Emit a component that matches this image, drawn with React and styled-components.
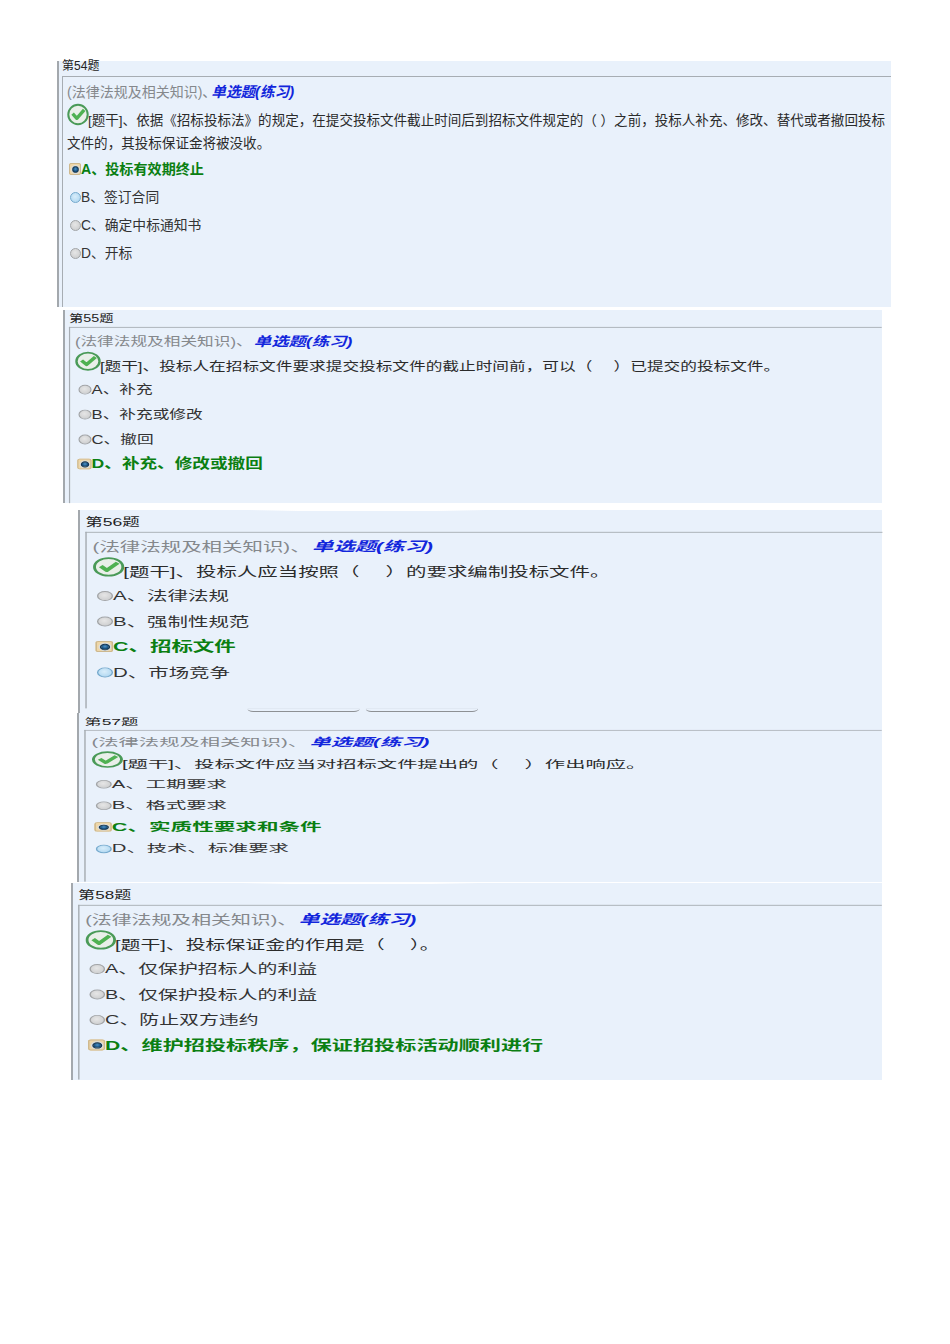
import React from "react";
import styled, { createGlobalStyle } from "styled-components";

const Global = createGlobalStyle`
  html, body { margin: 0; padding: 0; background: #fff; }
  body { font-family: "Liberation Sans", "Noto Sans CJK SC", sans-serif; }
`;

const Page = styled.div`
  width: 950px;
  height: 1344px;
  padding-top: 61px;
  box-sizing: border-box;
  display: flex;
  flex-direction: column;
  overflow: hidden;
`;

const Block = styled.section`
  position: relative;
  flex: none;
  margin-left: ${(p) => p.$left}px;
  margin-top: ${(p) => p.$gap}px;
  width: ${(p) => p.$width}px;
  height: ${(p) => p.$height}px;
  box-sizing: border-box;
  background: #e9f1fb;
  border-left: 2px solid #a3a8ad;
`;

const Scaled = styled.div`
  width: ${(p) => p.$width / p.$sx}px;
  height: ${(p) => p.$height / p.$sy}px;
  padding-top: ${(p) => p.$pad}px;
  margin-left: -2px;
  box-sizing: border-box;
  display: flex;
  flex-direction: column;
  transform: scale(${(p) => p.$sx}, ${(p) => p.$sy});
  transform-origin: 0 0;
`;

const Glint = styled.div`
  position: absolute;
  top: 0;
  left: 170px;
  width: 235px;
  height: 1px;
  background: linear-gradient(90deg, #e9f1fb, #ffffff 20%, #ffffff 80%, #e9f1fb);
`;

const Title = styled.div`
  flex: none;
  height: 11px;
  line-height: 11px;
  margin: 0 0 4px 5px;
  font-size: 12px;
  color: #222;
  white-space: nowrap;
`;

const Panel = styled.div`
  flex: 1;
  min-height: 0;
  margin-left: 4.5px;
  padding: 7px 0 0 4.5px;
  border-top: 1px solid #a7adb3;
  border-left: 1px solid #a7adb3;
`;

const Category = styled.div`
  height: 16px;
  line-height: 16px;
  margin-bottom: 8px;
  font-size: 14px;
  color: #85888c;
  white-space: nowrap;
`;

const Kind = styled.span`
  margin-left: ${(p) => p.$gap}px;
  font-size: 14.6px;
  color: #1226dc;
  font-weight: 700;
  font-style: italic;
`;

const Stem = styled.div`
  padding-top: 1px;
  line-height: 23px;
  margin-bottom: -1.5px;
  font-size: ${(p) => p.$size}px;
  color: #2b2b2b;
`;

const CheckIcon = styled.svg`
  width: 22px;
  height: 23px;
  margin: -10px -1px -1px 0;
  vertical-align: baseline;
`;

const Option = styled.div`
  display: flex;
  align-items: center;
  height: 28px;
  margin-left: 3px;
  font-size: ${(p) => (p.$correct ? p.$correctSize : p.$size)}px;
  white-space: nowrap;
  font-weight: ${(p) => (p.$correct ? 700 : 400)};
  color: ${(p) => (p.$correct ? "#0b7f12" : "#333")};
`;

const radioFill = {
  gray: "radial-gradient(circle at 45% 40%, #e6e6e6, #d0d1d2 70%)",
  blue: "radial-gradient(circle at 45% 40%, #d8edfa, #b5daf2 70%)",
  on: "radial-gradient(circle at 50% 40%, #4f93c8, #17507f 60%, #0f3558)",
};

const Radio = styled.span`
  flex: none;
  box-sizing: border-box;
  width: ${(p) => (p.$kind === "on" ? 7 : 11)}px;
  height: ${(p) => (p.$kind === "on" ? 7 : 11)}px;
  border-radius: 50%;
  border: 1px solid ${(p) => (p.$kind === "blue" ? "#74a9cd" : p.$kind === "gray" ? "#a2a4a6" : "#0f3558")};
  background: ${(p) => radioFill[p.$kind]};
  box-shadow: ${(p) => (p.$kind === "on" ? "0 0 0 1px #d8dde2" : "none")};
`;

const RadioSlot = styled.span`
  flex: none;
  box-sizing: border-box;
  width: ${(p) => (p.$on ? 12 : 11)}px;
  height: ${(p) => (p.$on ? 12 : 11)}px;
  margin: 3px 0 0 ${(p) => (p.$on ? -1 : 0)}px;
  display: flex;
  align-items: center;
  justify-content: center;
  border-radius: 2px;
  background: ${(p) => (p.$on ? "#efd7a8" : "transparent")};
  outline: ${(p) => (p.$on ? "1px solid #cdb88f" : "none")};
  outline-offset: -1px;
`;

const ButtonRow = styled.div`
  flex: none;
  height: 5px;
  display: flex;
  gap: 3.5px;
  padding-left: 116px;
`;

const ButtonEdge = styled.div`
  width: 77px;
  height: 3px;
  border-bottom: 1px solid #8d9094;
  border-radius: 0 0 6px 6px;
`;

const Check = () => (
  <CheckIcon viewBox="0 0 22 22" aria-hidden="true">
    <circle cx="11" cy="11" r="9.7" fill="#e9efe9" stroke="#4a9a58" strokeWidth="2" />
    <path d="M5.6 10.2 L9.8 14.8 L17.2 6.4" fill="none" stroke="#4fb152" strokeWidth="3.4" strokeLinejoin="round" />
  </CheckIcon>
);

const cat = "(法律法规及相关知识)、";

const questions = [
  {
    no: 54, left: 57, gap: 0, width: 834, height: 246, sx: 1, sy: 1, pad: 0, kindGap: -5, stemSize: 13.55, optSize: 13.8, correctSize: 14.1,
    stem: "依据《招标投标法》的规定，在提交投标文件截止时间后到招标文件规定的（ ）之前，投标人补充、修改、替代或者撤回投标文件的，其投标保证金将被没收。",
    options: [["A、投标有效期终止", "on", true], ["B、签订合同", "blue"], ["C、确定中标通知书", "gray"], ["D、开标", "gray"]],
  },
  {
    no: 55, left: 63, gap: 3, width: 819, height: 193, sx: 1.19, sy: 0.89, pad: 4, kindGap: 1, stemSize: 14, optSize: 14, correctSize: 14.8,
    stem: "投标人在招标文件要求提交投标文件的截止时间前，可以（　\u00a0）已提交的投标文件。",
    options: [["A、补充", "gray"], ["B、补充或修改", "gray"], ["C、撤回", "gray"], ["D、补充、修改或撤回", "on", true]],
  },
  {
    no: 56, left: 78, gap: 7, width: 804, height: 203, sx: 1.46, sy: 0.91, pad: 9, kindGap: 1, stemSize: 14, optSize: 14, correctSize: 14.7, glint: true, buttons: true,
    stem: "投标人应当按照（　\u00a0）的要求编制投标文件。",
    options: [["A、法律法规", "gray"], ["B、强制性规范", "gray"], ["C、招标文件", "on", true], ["D、市场竞争", "blue"]],
  },
  {
    no: 57, left: 77, gap: 0, width: 805, height: 169, sx: 1.45, sy: 0.77, pad: 7, kindGap: 1, stemSize: 14, optSize: 14, correctSize: 14.9,
    stem: "投标文件应当对招标文件提出的（　\u00a0）作出响应。",
    options: [["A、工期要求", "gray"], ["B、格式要求", "gray"], ["C、实质性要求和条件", "on", true], ["D、技术、标准要求", "blue"]],
  },
  {
    no: 58, left: 71, gap: 1, width: 811, height: 197, sx: 1.42, sy: 0.91, pad: 9, kindGap: 1, stemSize: 14, optSize: 14, correctSize: 14.9, glint: true,
    stem: "投标保证金的作用是（　\u00a0）。",
    options: [["A、仅保护招标人的利益", "gray"], ["B、仅保护投标人的利益", "gray"], ["C、防止双方违约", "gray"], ["D、维护招投标秩序，保证招投标活动顺利进行", "on", true]],
  },
];

export default function App() {
  return (
    <Page>
      <Global />
      {questions.map((q) => (
        <Block key={q.no} $left={q.left} $gap={q.gap} $width={q.width} $height={q.height}>
          {q.glint && <Glint />}
          <Scaled $width={q.width} $height={q.height} $sx={q.sx} $sy={q.sy} $pad={q.pad}>
            <Title>第{q.no}题</Title>
            <Panel>
              <Category>
                {cat}
                <Kind $gap={q.kindGap}>单选题(练习)</Kind>
              </Category>
              <Stem $size={q.stemSize}>
                <Check />[题干]、{q.stem}
              </Stem>
              {q.options.map(([text, kind, correct]) => (
                <Option key={text} $correct={correct} $size={q.optSize} $correctSize={q.correctSize}>
                  <RadioSlot $on={kind === "on"}>
                    <Radio $kind={kind} />
                  </RadioSlot>
                  {text}
                </Option>
              ))}
            </Panel>
            {q.buttons && (
              <ButtonRow>
                <ButtonEdge />
                <ButtonEdge />
              </ButtonRow>
            )}
          </Scaled>
        </Block>
      ))}
    </Page>
  );
}
